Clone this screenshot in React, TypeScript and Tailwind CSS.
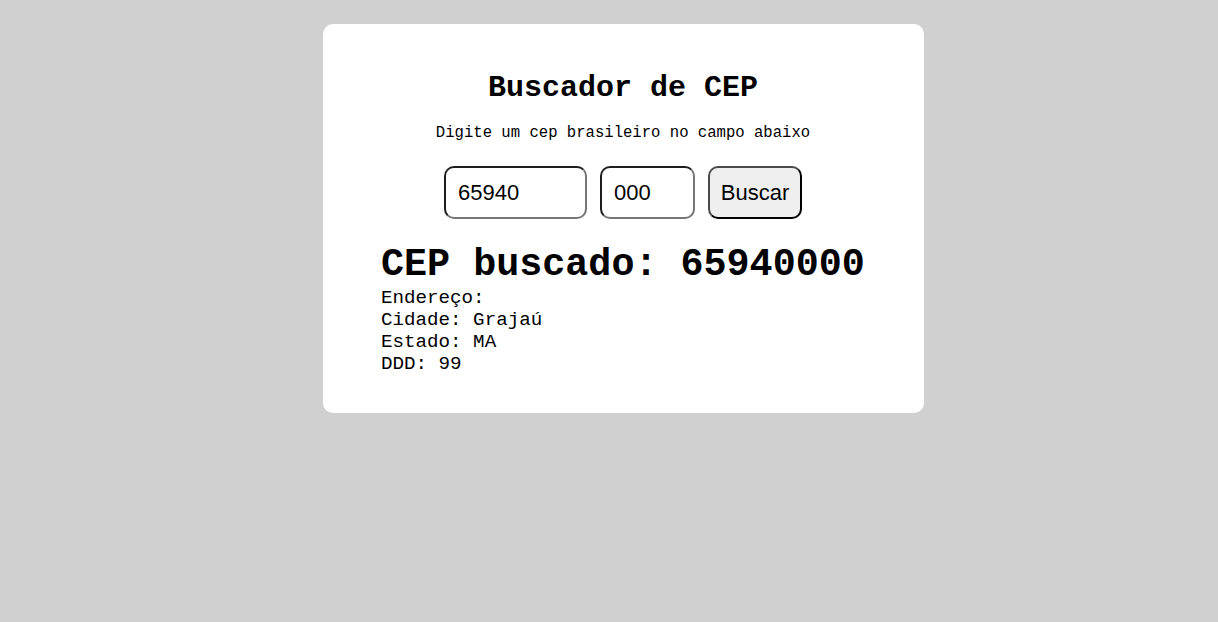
import React from "react";

export default function App() {
  const mono = { fontFamily: '"Liberation Mono", "DejaVu Sans Mono", monospace' };
  return (
    <div className="min-h-[622px] w-full bg-[#d0d0d0] pt-[24px]" style={mono}>
      <div className="ml-[323px] w-[601px] rounded-[10px] bg-white pt-[47px] pb-[38px] pl-[58px] pr-[59px] text-black">
        <h1 className="text-center text-[30px] font-bold leading-[34px]">Buscador de CEP</h1>
        <p className="mt-[19px] text-center text-[15.6px] leading-[18px]">
          Digite um cep brasileiro no campo abaixo
        </p>
        <div
          className="mt-[24px] flex justify-center gap-[13px]"
          style={{ fontFamily: '"Liberation Sans", Arial, sans-serif' }}
        >
          <input
            readOnly
            value="65940"
            className="h-[53px] w-[143px] rounded-[10px] border-2 border-t-[#1e1e1e] border-l-[#1e1e1e] border-r-[#767676] border-b-[#767676] bg-white px-[12px] text-[22px] text-black outline-none"
          />
          <input
            readOnly
            value="000"
            className="h-[53px] w-[95px] rounded-[10px] border-2 border-t-[#1e1e1e] border-l-[#1e1e1e] border-r-[#767676] border-b-[#767676] bg-white px-[12px] text-[22px] text-black outline-none"
          />
          <button className="h-[53px] w-[94px] rounded-[10px] border-2 border-t-[#4a4a4a] border-l-[#4a4a4a] border-r-black border-b-black bg-[#efefef] text-center text-[22px] text-black">
            Buscar
          </button>
        </div>
        <h2 className="mt-[24px] whitespace-nowrap text-[38.4px] font-bold leading-[44px]">CEP buscado: 65940000</h2>
        <div className="text-[19.2px] leading-[22px]">
          <p>Endereço: </p>
          <p>Cidade: Grajaú</p>
          <p>Estado: MA</p>
          <p>DDD: 99</p>
        </div>
      </div>
    </div>
  );
}
